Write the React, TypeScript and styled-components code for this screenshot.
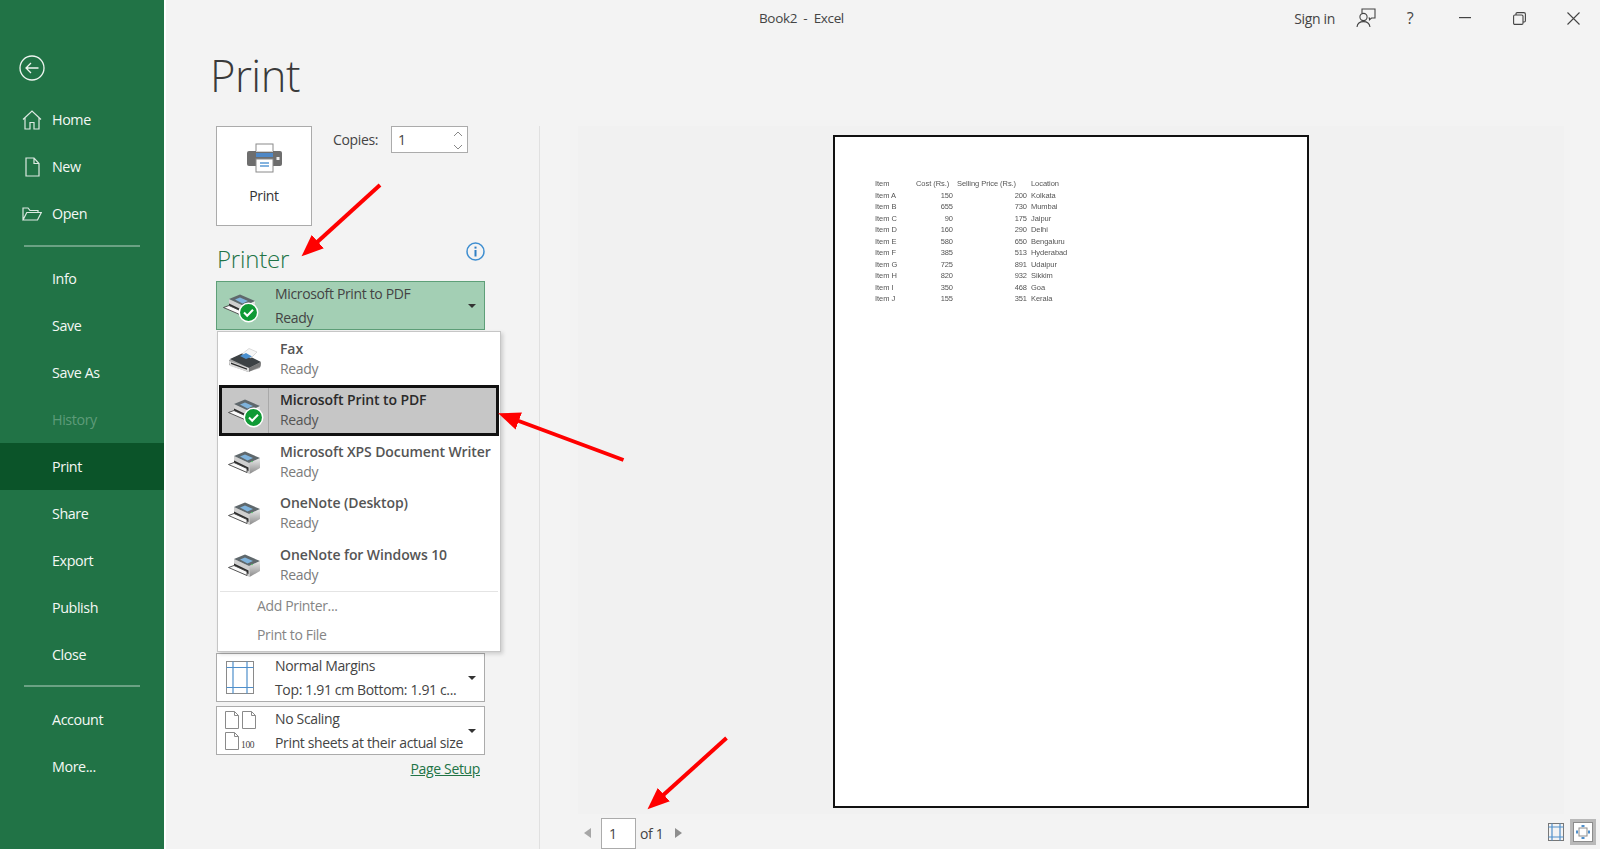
import React from "react"
import styled, { createGlobalStyle } from "styled-components"

const green = "#217346"
const uiFont = `"Open Sans", "Noto Sans", sans-serif`

const GlobalStyle = createGlobalStyle`
  html, body {
    margin: 0;
    padding: 0;
    background: #f3f3f3;
    overflow: hidden;
  }
  * {
    box-sizing: border-box;
  }
`

const Window = styled.div`
  position: relative;
  display: flex;
  width: 1600px;
  height: 849px;
  overflow: hidden;
  font-family: ${uiFont};
  font-size: 14px;
  letter-spacing: -0.35px;
  color: #444;
`

/* backstage nav */

const Sidebar = styled.nav`
  width: 164px;
  flex: none;
  display: flex;
  flex-direction: column;
  background: ${green};
  padding-top: 55px;
`

const BackButton = styled.div`
  display: flex;
  height: 26px;
  margin: 0 0 15px 19px;
`

const NavRow = styled.div<{ $active?: boolean; $disabled?: boolean }>`
  display: flex;
  align-items: center;
  height: 47px;
  background: ${(p) => (p.$active ? "#0b5429" : "transparent")};
  color: ${(p) => (p.$disabled ? "#5d9b79" : "#f4f8f5")};
  font-size: 14.3px;
  letter-spacing: -0.4px;
`

const NavIcon = styled.span`
  flex: none;
  display: flex;
  justify-content: center;
  width: 20px;
  margin: 0 10px 0 22px;
`

const NavDivider = styled.div<{ $top: number; $bottom: number }>`
  height: 2px;
  margin: ${(p) => p.$top}px 24px ${(p) => p.$bottom}px 24px;
  background: #6ba284;
`

/* main area */

const Main = styled.main`
  flex: 1;
  display: flex;
  flex-direction: column;
  border-left: 2px solid #fff;
  background: #f3f3f3;
`

const TitleBar = styled.header`
  display: flex;
  align-items: center;
  height: 36px;
  padding-left: 593px;
`

const WindowTitle = styled.span`
  font-size: 13.5px;
  white-space: pre;
  color: #444;
`

const SignIn = styled.span`
  margin-left: auto;
  margin-right: 9px;
  font-size: 14px;
`

const TitleButton = styled.span<{ $width: number }>`
  display: flex;
  align-items: center;
  justify-content: center;
  width: ${(p) => p.$width}px;
  font-size: 16px;
  color: #444;
`

const Heading = styled.h1`
  height: 90px;
  margin: 0;
  padding: 9px 0 0 44px;
  font-size: 43.5px;
  line-height: 62px;
  font-weight: 300;
  letter-spacing: -0.5px;
  color: #3a3a3a;
`

const Content = styled.div`
  flex: 1;
  display: flex;
  min-height: 0;
`

const LeftColumn = styled.section`
  width: 374px;
  flex: none;
  padding-left: 50px;
  border-right: 1px solid #e0e0e0;
`

const PrintRow = styled.div`
  display: flex;
  align-items: flex-start;
`

const PrintButton = styled.button`
  display: flex;
  flex-direction: column;
  align-items: center;
  width: 96px;
  height: 100px;
  padding: 16px 0 0;
  border: 1px solid #ababab;
  background: #fff;
  font: inherit;
  letter-spacing: inherit;
  color: #333;
`

const PrintButtonLabel = styled.span`
  margin-top: 13px;
`

const CopiesLabel = styled.label`
  margin: 4px 13px 0 21px;
`

const CopiesInput = styled.div`
  position: relative;
  display: flex;
  align-items: center;
  width: 77px;
  height: 27px;
  padding-left: 6px;
  border: 1px solid #ababab;
  background: #fff;
`

const Spinner = styled.span`
  position: absolute;
  right: 3px;
  top: 3px;
  display: flex;
`

const PrinterHeader = styled.div`
  display: flex;
  justify-content: space-between;
  width: 269px;
  height: 39px;
  margin-top: 16px;
`

const PrinterTitle = styled.h2`
  margin: 0 0 0 1px;
  font-size: 24px;
  line-height: 34px;
  font-weight: 300;
  letter-spacing: -0.2px;
  color: ${green};
`

const InfoWrap = styled.span`
  display: flex;
`

const DropWrap = styled.div`
  position: relative;
  width: 269px;
`

const DropBox = styled.div<{ $active?: boolean }>`
  display: flex;
  align-items: center;
  height: 49px;
  margin-bottom: 4px;
  border: 1px solid ${(p) => (p.$active ? "#5e9f78" : "#ababab")};
  background: ${(p) => (p.$active ? "#a3cfb4" : "#fff")};
`

const DropIcon = styled.span<{ $pad: number }>`
  flex: none;
  display: flex;
  width: 58px;
  padding-left: ${(p) => p.$pad}px;
`

const DropText = styled.span`
  flex: 1;
  display: flex;
  flex-direction: column;
  line-height: 23.5px;
  white-space: nowrap;
  color: #444;
`

const Caret = styled.span`
  flex: none;
  width: 0;
  height: 0;
  margin: 0 8px 0 0;
  border-left: 4.5px solid transparent;
  border-right: 4.5px solid transparent;
  border-top: 4.5px solid #333;
`

const PrinterMenu = styled.div`
  position: absolute;
  z-index: 2;
  top: 50px;
  left: 1px;
  width: 284px;
  height: 321px;
  padding: 1px 1px 0;
  background: #fff;
  border: 1px solid #c6c6c6;
  box-shadow: 2px 2px 4px rgba(0, 0, 0, 0.16);
`

const MenuRow = styled.div<{ $selected?: boolean }>`
  display: flex;
  align-items: center;
  height: 51.5px;
  border: 3px solid ${(p) => (p.$selected ? "#111" : "transparent")};
  background: ${(p) => (p.$selected ? "#c6c6c6" : "transparent")};
`

const MenuIcon = styled.span<{ $selected?: boolean }>`
  flex: none;
  align-self: stretch;
  display: flex;
  align-items: center;
  justify-content: center;
  width: 47px;
  padding-top: 2px;
  border-right: 1px solid ${(p) => (p.$selected ? "#a9a9a9" : "transparent")};
`

const MenuText = styled.span`
  display: flex;
  flex-direction: column;
  margin-left: 11px;
  line-height: 20.2px;
  white-space: nowrap;
`

const MenuName = styled.span<{ $selected?: boolean }>`
  font-weight: 600;
  letter-spacing: -0.1px;
  color: ${(p) => (p.$selected ? "#2a2a2a" : "#555")};
`

const MenuStatus = styled.span<{ $selected?: boolean }>`
  color: ${(p) => (p.$selected ? "#555" : "#7b7b7b")};
`

const MenuDivider = styled.div`
  height: 1px;
  margin: 0 1px;
  background: #e4e4e4;
`

const MenuAction = styled.div`
  display: flex;
  align-items: center;
  height: 28.5px;
  padding-left: 38px;
  color: #858585;
`

const HiddenSettings = styled.div`
  height: 319px;
`

const PageSetup = styled.a`
  display: block;
  margin-top: 3px;
  padding-right: 5px;
  text-align: right;
  color: ${green};
  text-decoration: underline;
`

/* preview */

const PreviewColumn = styled.section`
  flex: 1;
  display: flex;
  flex-direction: column;
  margin-left: 38px;
`

const PreviewArea = styled.div`
  display: flex;
  justify-content: center;
  height: 690px;
  margin-right: 36px;
  padding-top: 9px;
  background: #f1f1f1;
`

const Page = styled.div`
  width: 476px;
  height: 673px;
  padding: 41px 0 0 40px;
  background: #fff;
  border: 2px solid #111;
`

const SheetGrid = styled.div`
  display: grid;
  grid-template-columns: 41px 37px 74px 60px;
  grid-auto-rows: 11.55px;
  font-family: "Liberation Sans", Arial, sans-serif;
  font-size: 7.5px;
  line-height: 11.55px;
  letter-spacing: -0.05px;
  color: #555;
  filter: blur(0.25px);
`

const Cell = styled.span<{ $align?: "right"; $pad?: boolean }>`
  text-align: ${(p) => p.$align ?? "left"};
  padding-left: ${(p) => (p.$pad ? 4 : 0)}px;
  white-space: nowrap;
`

const Pager = styled.footer`
  display: flex;
  align-items: flex-start;
  padding: 4px 0 0 6px;
`

const PagerArrow = styled.span<{ $dir: "left" | "right" }>`
  width: 0;
  height: 0;
  margin-top: 10px;
  border-top: 5px solid transparent;
  border-bottom: 5px solid transparent;
  ${(p) => (p.$dir === "left" ? "border-right: 7px solid #a6a6a6;" : "border-left: 7px solid #8e8e8e;")}
`

const PageInput = styled.div`
  display: flex;
  align-items: center;
  width: 35px;
  height: 31px;
  margin: 0 4px 0 10px;
  padding-left: 7px;
  border: 1px solid #ababab;
  background: #fff;
`

const PageCount = styled.span`
  margin: 6px 12px 0 0;
`

const ViewButtons = styled.div`
  display: flex;
  align-items: center;
  gap: 6px;
  margin: 1px 4px 0 auto;
`

const SelectedView = styled.span`
  display: flex;
  padding: 3px;
  background: #b9b9b9;
`

const ArrowLayer = styled.svg`
  position: absolute;
  z-index: 3;
  top: 0;
  left: 0;
  pointer-events: none;
`

/* icons */

const BackIcon = () => (
  <svg width="26" height="26" viewBox="0 0 26 26" fill="none" stroke="#eef5f0" strokeWidth="1.3">
    <circle cx="13" cy="13" r="12" />
    <path d="M19.5 13H7M12 8l-5 5 5 5" />
  </svg>
)

const HomeIcon = () => (
  <svg width="20" height="20" viewBox="0 0 20 20" fill="none" stroke="#dce9e1" strokeWidth="1.2">
    <path d="M1 9.5 10 1l9 8.5M3 7.8V19h5v-6.5h4V19h5V7.8" />
  </svg>
)

const FileIcon = () => (
  <svg width="15" height="20" viewBox="0 0 15 20" fill="none" stroke="#dce9e1" strokeWidth="1.2">
    <path d="M1 1h8l5 5.5V19H1zM9 1v5.5h5" />
  </svg>
)

const FolderIcon = () => (
  <svg width="20" height="14" viewBox="0 0 20 14" fill="none" stroke="#dce9e1" strokeWidth="1.2">
    <path d="M1 13V1h5l2 2.5h8V5.5M1 13h14.5l3.8-7.5H4.8L1 13z" />
  </svg>
)

const FeedbackIcon = () => (
  <svg width="20" height="20" viewBox="0 0 20 20" fill="none" stroke="#444" strokeWidth="1.1">
    <path d="M6 5V1h13v9h-3.5l-2 1.8V10h-1" />
    <circle cx="7.5" cy="9" r="3.6" />
    <path d="M1 19c.4-3.6 3-5.4 6.5-5.4s6 1.8 6.5 5.4" />
  </svg>
)

const MinimizeIcon = () => (
  <svg width="12" height="2" viewBox="0 0 12 2"><rect width="12" height="1.2" fill="#444" /></svg>
)

const RestoreIcon = () => (
  <svg width="13" height="13" viewBox="0 0 13 13" fill="none" stroke="#444" strokeWidth="1.1">
    <rect x="0.6" y="3" width="9.4" height="9.4" rx="1.2" />
    <path d="M3 3V1.8C3 1 3.5.6 4.2.6h6.6c1 0 1.6.6 1.6 1.6v6.6c0 .8-.4 1.2-1.2 1.2H10" />
  </svg>
)

const CloseIcon = () => (
  <svg width="13" height="13" viewBox="0 0 13 13" stroke="#444" strokeWidth="1.1">
    <path d="M.5.5l12 12M12.5.5l-12 12" />
  </svg>
)

const SpinIcon = () => (
  <svg width="12" height="21" viewBox="0 0 12 21" fill="none" stroke="#888" strokeWidth="1">
    <path d="M2 6l4-4 4 4M2 15l4 4 4-4" />
  </svg>
)

const BigPrinterIcon = () => (
  <svg width="35" height="30" viewBox="0 0 35 30">
    <rect x="9" y="1" width="17" height="14" fill="#fff" stroke="#8a8a8a" />
    <rect x="0" y="8" width="35" height="15" rx="2" fill="#6e6e6e" />
    <rect x="9" y="10" width="17" height="4" fill="#4f88c6" />
    <path d="M9 8.5h17" stroke="#cfcfcf" />
    <rect x="9" y="16" width="17" height="13" fill="#fff" stroke="#8a8a8a" />
    <path d="M13 20h9M13 23h9" stroke="#5b9bd5" strokeWidth="1.4" />
    <rect x="29.5" y="14" width="3" height="3" fill="#eee" />
  </svg>
)

const InfoIcon = () => (
  <svg width="19" height="19" viewBox="0 0 19 19" fill="none">
    <circle cx="9.5" cy="9.5" r="8.5" stroke="#3e8ed0" strokeWidth="1.5" />
    <rect x="8.5" y="8" width="2" height="6.5" fill="#2f7fc4" />
    <rect x="8.5" y="4.6" width="2" height="2" fill="#2f7fc4" />
  </svg>
)

const DevicePrinterIcon = ({ ready }: { ready?: boolean }) => (
  <svg width="34" height="24" viewBox="0 0 34 24" overflow="visible">
    <defs>
      <linearGradient id="printerSide" x1="0" y1="0" x2="0" y2="1">
        <stop offset="0" stopColor="#ececec" />
        <stop offset="1" stopColor="#8a8a8a" />
      </linearGradient>
    </defs>
    <path d="M21 12 32 7v10L21.5 23z" fill="url(#printerSide)" />
    <path d="M6 5 21 12l.5 11L6 16z" fill="#cfcfcf" />
    <path d="M6 5 17 .5 32 7 21 12z" fill="#5f686c" />
    <path d="M12 5.5 17 3.5 25 7 19.5 9.5z" fill="#7fb3dc" />
    <circle cx="24" cy="10.5" r="0.8" fill="#57c26a" />
    <path d="M6 9.5 20.5 16.5V20L6 13.5z" fill="#2a2a2a" />
    <path d="M.5 13.5 6 11.5 19 17.5v4z" fill="#fafafa" stroke="#444" strokeWidth="0.9" />
    {ready && (
      <g>
        <circle cx="25.5" cy="18.5" r="9.2" fill="#0f9a35" stroke="#fff" strokeWidth="1.5" />
        <path d="M21 18.5l3.2 3.2 5.8-6" fill="none" stroke="#fff" strokeWidth="2" />
      </g>
    )}
  </svg>
)

const FaxIcon = () => (
  <svg width="34" height="24" viewBox="0 0 34 24">
    <path d="M1 12 13 6.5 33 15l-1 5-12 4L1 17z" fill="#a5a5a5" />
    <path d="M2 11 15 5 33 14 21 20z" fill="#3c4144" />
    <path d="M14 6 21 0.5 29 4 23 10z" fill="#f7f7f7" stroke="#bbb" strokeWidth="0.5" />
    <path d="M12 8 18 5 24 8.5 18 11z" fill="#4a90d0" />
    <path d="M21 20 33 14l-.5 4.5L20.5 24z" fill="#777" />
    <path d="M1 13 21 20v4L2 18z" fill="#dcdcdc" />
    <path d="M3 14.5 19 20.5v1.2L3 16z" fill="#2b2b2b" />
  </svg>
)

const MarginsIcon = () => (
  <svg width="28" height="33" viewBox="0 0 28 33" fill="none">
    <rect x="0.5" y="0.5" width="27" height="32" stroke="#8a8a8a" />
    <path d="M7 .5v32M21 .5v32M.5 6.5h27M.5 26.5h27" stroke="#4f8fcb" strokeWidth="1.2" />
  </svg>
)

const ScalingIcon = () => (
  <svg width="34" height="39" viewBox="0 0 34 39" fill="none" stroke="#8a8a8a">
    <path d="M.5.5h9l4 4v13H.5zM9.5.5v4h4" />
    <path d="M17.5.5h9l4 4v13h-13zM26.5.5v4h4" />
    <path d="M.5 21.5h9l4 4v13H.5zM9.5 21.5v4h4" />
    <text x="16" y="37" fontSize="9.5" fontFamily="Liberation Serif, serif" fill="#444" stroke="none">100</text>
  </svg>
)

const PageMarginsIcon = () => (
  <svg width="16" height="18" viewBox="0 0 16 18" fill="none">
    <rect x="0.5" y="0.5" width="15" height="17" stroke="#777" />
    <path d="M4 .5v17M12 .5v17M.5 4h15M.5 14h15" stroke="#4f8fcb" strokeWidth="1.2" />
  </svg>
)

const ZoomPageIcon = () => (
  <svg width="20" height="20" viewBox="0 0 20 20" fill="none">
    <rect width="20" height="20" fill="#fff" />
    <rect x="0.5" y="0.5" width="19" height="19" stroke="#8c8c8c" />
    <rect x="6" y="6" width="8" height="8" stroke="#8c8c8c" />
    <path d="M8.5 3h3v2h-3zM8.5 15h3v2h-3zM3 8.5h2v3H3zM15 8.5h2v3h-2z" fill="#4f8fcb" />
  </svg>
)

const navTop = [
  { label: "Home", icon: <HomeIcon /> },
  { label: "New", icon: <FileIcon /> },
  { label: "Open", icon: <FolderIcon /> },
]

const navMiddle = ["Info", "Save", "Save As", "History", "Print", "Share", "Export", "Publish", "Close"]
const navBottom = ["Account", "More..."]

const printers = [
  { name: "Fax", fax: true },
  { name: "Microsoft Print to PDF", selected: true },
  { name: "Microsoft XPS Document Writer" },
  { name: "OneNote (Desktop)" },
  { name: "OneNote for Windows 10" },
]

const sheetRows = [
  ["Item A", "150", "200", "Kolkata"],
  ["Item B", "655", "730", "Mumbai"],
  ["Item C", "90", "175", "Jaipur"],
  ["Item D", "160", "290", "Delhi"],
  ["Item E", "580", "650", "Bengaluru"],
  ["Item F", "385", "513", "Hyderabad"],
  ["Item G", "725", "891", "Udaipur"],
  ["Item H", "820", "932", "Sikkim"],
  ["Item I", "350", "468", "Goa"],
  ["Item J", "155", "351", "Kerala"],
]

const App = () => {
  return (
    <Window>
      <GlobalStyle />
      <Sidebar>
        <BackButton><BackIcon /></BackButton>
        {navTop.map((item) => (
          <NavRow key={item.label}>
            <NavIcon>{item.icon}</NavIcon>
            {item.label}
          </NavRow>
        ))}
        <NavDivider $top={8} $bottom={8} />
        {navMiddle.map((label) => (
          <NavRow key={label} $active={label === "Print"} $disabled={label === "History"}>
            <NavIcon />
            {label}
          </NavRow>
        ))}
        <NavDivider $top={7} $bottom={9} />
        {navBottom.map((label) => (
          <NavRow key={label}>
            <NavIcon />
            {label}
          </NavRow>
        ))}
      </Sidebar>

      <Main>
        <TitleBar>
          <WindowTitle>{"Book2  -  Excel"}</WindowTitle>
          <SignIn>Sign in</SignIn>
          <TitleButton $width={44}><FeedbackIcon /></TitleButton>
          <TitleButton $width={44}>?</TitleButton>
          <TitleButton $width={6} />
          <TitleButton $width={54}><MinimizeIcon /></TitleButton>
          <TitleButton $width={54}><RestoreIcon /></TitleButton>
          <TitleButton $width={54}><CloseIcon /></TitleButton>
        </TitleBar>
        <Heading>Print</Heading>
        <Content>
          <LeftColumn>
            <PrintRow>
              <PrintButton>
                <BigPrinterIcon />
                <PrintButtonLabel>Print</PrintButtonLabel>
              </PrintButton>
              <CopiesLabel>Copies:</CopiesLabel>
              <CopiesInput>
                1
                <Spinner><SpinIcon /></Spinner>
              </CopiesInput>
            </PrintRow>

            <PrinterHeader>
              <PrinterTitle>Printer</PrinterTitle>
              <InfoWrap><InfoIcon /></InfoWrap>
            </PrinterHeader>

            <DropWrap>
              <DropBox $active>
                <DropIcon $pad={6}><DevicePrinterIcon ready /></DropIcon>
                <DropText>
                  <span>Microsoft Print to PDF</span>
                  <span>Ready</span>
                </DropText>
                <Caret />
              </DropBox>
              <PrinterMenu>
                {printers.map((p) => (
                  <MenuRow key={p.name} $selected={p.selected}>
                    <MenuIcon $selected={p.selected}>
                      {p.fax ? <FaxIcon /> : <DevicePrinterIcon ready={p.selected} />}
                    </MenuIcon>
                    <MenuText>
                      <MenuName $selected={p.selected}>{p.name}</MenuName>
                      <MenuStatus $selected={p.selected}>Ready</MenuStatus>
                    </MenuText>
                  </MenuRow>
                ))}
                <MenuDivider />
                <MenuAction>Add Printer...</MenuAction>
                <MenuAction>Print to File</MenuAction>
              </PrinterMenu>
              <HiddenSettings />
              <DropBox>
                <DropIcon $pad={9}><MarginsIcon /></DropIcon>
                <DropText>
                  <span>Normal Margins</span>
                  <span>Top: 1.91 cm Bottom: 1.91 c...</span>
                </DropText>
                <Caret />
              </DropBox>
              <DropBox>
                <DropIcon $pad={8}><ScalingIcon /></DropIcon>
                <DropText>
                  <span>No Scaling</span>
                  <span>Print sheets at their actual size</span>
                </DropText>
                <Caret />
              </DropBox>
              <PageSetup>Page Setup</PageSetup>
            </DropWrap>
          </LeftColumn>

          <PreviewColumn>
            <PreviewArea>
              <Page>
                <SheetGrid>
                  <Cell>Item</Cell>
                  <Cell>Cost (Rs.)</Cell>
                  <Cell $pad>Selling Price (Rs.)</Cell>
                  <Cell $pad>Location</Cell>
                  {sheetRows.map((row) => (
                    <React.Fragment key={row[0]}>
                      <Cell>{row[0]}</Cell>
                      <Cell $align="right">{row[1]}</Cell>
                      <Cell $align="right">{row[2]}</Cell>
                      <Cell $pad>{row[3]}</Cell>
                    </React.Fragment>
                  ))}
                </SheetGrid>
              </Page>
            </PreviewArea>
            <Pager>
              <PagerArrow $dir="left" />
              <PageInput>1</PageInput>
              <PageCount>of 1</PageCount>
              <PagerArrow $dir="right" />
              <ViewButtons>
                <PageMarginsIcon />
                <SelectedView><ZoomPageIcon /></SelectedView>
              </ViewButtons>
            </Pager>
          </PreviewColumn>
        </Content>
      </Main>

      <ArrowLayer width="1600" height="849" viewBox="0 0 1600 849">
        <defs>
          <marker id="head" markerUnits="userSpaceOnUse" markerWidth="24" markerHeight="20" refX="10" refY="10" orient="auto">
            <path d="M0 1 L22 10 L0 19 Z" fill="#f00" />
          </marker>
        </defs>
        <g stroke="#f00" strokeWidth="4" markerEnd="url(#head)">
          <line x1="380" y1="185" x2="310.4" y2="248.3" />
          <line x1="623.5" y1="460" x2="509.4" y2="417.5" />
          <line x1="726.5" y1="738" x2="656.4" y2="801.3" />
        </g>
      </ArrowLayer>
    </Window>
  )
}

export default App
